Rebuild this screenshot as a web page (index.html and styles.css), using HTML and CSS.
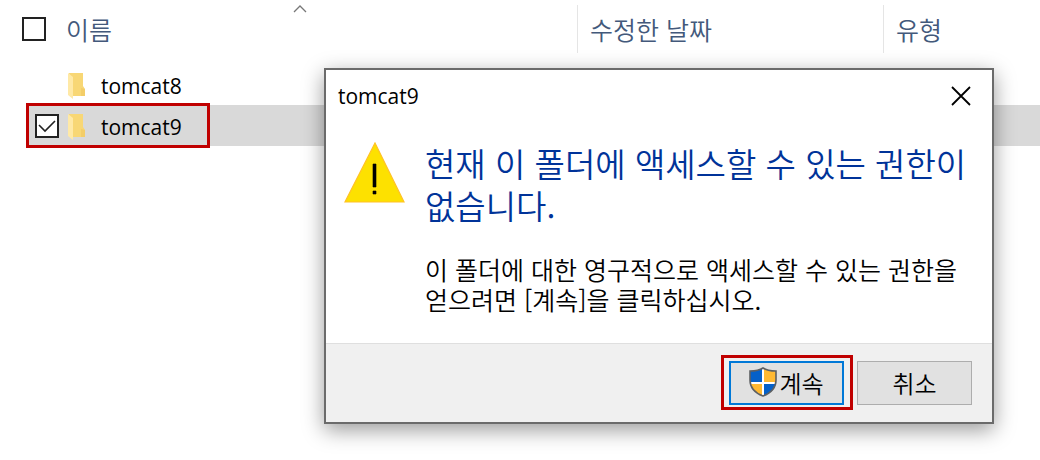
FILE: index.html
```
<!DOCTYPE html>
<html lang="ko">
	<head>
		<meta charset="utf-8">
		<title>tomcat9</title>
		<link rel="stylesheet" href="styles.css">
	</head>
	<body>
		<table class="files">
			<thead>
				<tr>
					<th class="col-name">
						<div class="head head-first">
							<input type="checkbox" id="all" class="check">
							<label for="all">이름</label>
							<svg class="sort" width="14" height="8" viewBox="0 0 14 8"><path d="M1 7L7 1L13 7" fill="none" stroke="#777" stroke-width="1.3"/></svg>
						</div>
					</th>
					<th class="col-date"><div class="head">수정한 날짜</div></th>
					<th class="col-type"><div class="head">유형</div></th>
				</tr>
			</thead>
			<tbody>
				<tr>
					<td>
						<div class="name">
							<span class="tick tick-off"><input type="checkbox" id="tomcat8" class="check"></span>
							<svg class="folder" width="20" height="28" viewBox="0 0 20 28">
								<path d="M2 2H16V15L18 18V25H6Z" fill="#f8d775"/>
								<path d="M14 17L18 18V25H14Z" fill="#f3cd68"/>
								<path d="M1 2L6 6V28L1 24Z" fill="#ffe9a6"/>
							</svg>
							<label for="tomcat8">tomcat8</label>
						</div>
					</td>
					<td></td>
					<td></td>
				</tr>
				<tr class="selected">
					<td>
						<div class="name">
							<span class="tick">
								<input type="checkbox" id="tomcat9" class="check" checked>
								<svg class="tick-mark" width="20" height="14" viewBox="0 0 20 14"><path d="M2 6L8 12L18 2" fill="none" stroke="#222" stroke-width="1.6"/></svg>
							</span>
							<svg class="folder" width="20" height="28" viewBox="0 0 20 28">
								<path d="M2 2H16V15L18 18V25H6Z" fill="#f8d775"/>
								<path d="M14 17L18 18V25H14Z" fill="#f3cd68"/>
								<path d="M1 2L6 6V28L1 24Z" fill="#ffe9a6"/>
							</svg>
							<label for="tomcat9">tomcat9</label>
							<span class="mark mark-row"></span>
						</div>
					</td>
					<td></td>
					<td></td>
				</tr>
			</tbody>
		</table>

		<div class="dialog" role="dialog" aria-labelledby="dialog-title">
			<div class="titlebar">
				<span id="dialog-title">tomcat9</span>
				<button type="button" class="close" aria-label="닫기">
					<svg width="20" height="20" viewBox="0 0 20 20"><path d="M1 1L19 19M19 1L1 19" fill="none" stroke="#000" stroke-width="1.8"/></svg>
				</button>
			</div>
			<div class="content">
				<svg class="warning" width="62" height="62" viewBox="0 0 62 62">
					<path d="M31 1L60 60H1Z" fill="#fde100" stroke="#ffc226" stroke-width="1.2"/>
					<path d="M29 22H32V45H29ZM29 49H32V52H29Z" fill="#000" stroke="#000" stroke-width=".6"/>
				</svg>
				<div class="message">
					<h1>현재 이 폴더에 액세스할 수 있는 권한이 없습니다.</h1>
					<p>이 폴더에 대한 영구적으로 액세스할 수 있는 권한을 얻으려면 [계속]을 클릭하십시오.</p>
				</div>
			</div>
			<div class="footer">
				<button type="button" class="btn btn-default">
					<svg width="28" height="30" viewBox="0 0 28 30">
						<clipPath id="shield"><path d="M14 1C11 3 6 4 1 4V13C1 21 6 26 14 29C22 26 27 21 27 13V4C22 4 17 3 14 1Z"/></clipPath>
						<g clip-path="url(#shield)">
							<path d="M0 0H28V30H0Z" fill="#fff"/>
							<path d="M0 0H13V15H0ZM15 17H28V30H15Z" fill="#0560c8"/>
							<path d="M15 0H28V15H15ZM0 17H13V30H0Z" fill="#ffb932"/>
						</g>
						<path d="M14 1C11 3 6 4 1 4V13C1 21 6 26 14 29C22 26 27 21 27 13V4C22 4 17 3 14 1Z" fill="none" stroke="#5d6063" stroke-width="1.6"/>
					</svg>
					<span>계속</span>
					<span class="mark mark-btn"></span>
				</button>
				<button type="button" class="btn">취소</button>
			</div>
		</div>
	</body>
</html>
```
FILE: styles.css
```
* {
	box-sizing: border-box;
}

body {
	margin: 0;
	min-height: 100vh;
	background-color: white;
	color: black;
	font-family: "Open Sans", "Noto Sans CJK KR", sans-serif;
	font-size: 21px;
}

/* file list */
.files {
	width: 100%;
	table-layout: fixed;
	border-collapse: separate;
	border-spacing: 0;
}

.files th, .files td {
	padding: 0;
	text-align: left;
	font-weight: normal;
}

.files th {
	padding: 5px 0 11px;
}

.col-date {
	width: 306px;
}

.col-type {
	width: 157px;
}

.head {
	display: flex;
	align-items: center;
	position: relative;
	height: 48px;
	padding-left: 12px;
	border-left: 1px solid #e5e5e5;
	color: #43597b;
	font-family: "Noto Sans CJK KR", sans-serif;
	font-size: 25px;
	font-weight: 350;
	line-height: 30px;
}

.head-first {
	gap: 20px;
	margin-left: 22px;
	padding-left: 0;
	border-left: 0;
}

.sort {
	position: absolute;
	top: 0;
	left: 50%;
	transform: translateX(-50%);
}

.name {
	display: flex;
	align-items: center;
	position: relative;
	height: 41px;
	margin-left: 27px;
	padding-left: 8px;
}

.name label {
	padding-top: 2px;
}

.selected .name, .selected td + td {
	background-color: #d9d9d9;
}

.check {
	appearance: none;
	width: 24px;
	height: 24px;
	margin: 0;
	border: 2px solid #222;
	background-color: white;
}

.tick {
	display: grid;
	place-items: center;
}

.tick > * {
	grid-area: 1 / 1;
}

.tick-mark {
	pointer-events: none;
}

.tick-off {
	visibility: hidden;
}

.folder {
	margin: 0 14px 0 8px;
}

/* red highlight frames */
.mark {
	position: absolute;
	border: 3px solid #c00000;
	pointer-events: none;
}

.mark-row {
	top: -2px;
	left: -1px;
	z-index: 1;
	width: 184px;
	height: 45px;
}

.mark-btn {
	inset: -8px -11px -7px -10px;
}

/* permission dialog */
.dialog {
	position: absolute;
	top: 68px;
	left: 324px;
	right: 46px;
	z-index: 2;
	border: 2px solid #6b6b6b;
	background-color: white;
	box-shadow: 0 6px 20px rgba(0, 0, 0, .4);
}

.titlebar {
	display: flex;
	justify-content: space-between;
	align-items: center;
	height: 52px;
	padding: 0 21px 0 12px;
}

.close {
	display: flex;
	padding: 0;
	border: 0;
	background: none;
}

.content {
	display: flex;
	align-items: flex-start;
	gap: 19px;
	padding: 20px 12px 29px 18px;
}

.warning {
	flex: none;
}

.message {
	font-family: "Noto Sans CJK KR", sans-serif;
	font-weight: 350;
	word-break: keep-all;
}

.message h1 {
	margin: 0 0 28px;
	color: #003399;
	font-size: 33px;
	font-weight: 350;
	line-height: 42px;
}

.message p {
	margin: 0;
	font-size: 25px;
	line-height: 30px;
}

.footer {
	display: flex;
	justify-content: flex-end;
	gap: 13px;
	padding: 17px 20px;
	border-top: 1px solid #dfdfdf;
	background-color: #f0f0f0;
}

.btn {
	display: flex;
	justify-content: center;
	align-items: center;
	position: relative;
	width: 115px;
	height: 44px;
	padding: 0 0 2px;
	border: 1px solid #adadad;
	background-color: #e1e1e1;
	color: black;
	font-family: "Noto Sans CJK KR", sans-serif;
	font-size: 24px;
	font-weight: 350;
}

.btn-default {
	gap: 2px;
	border: 2px solid #0078d7;
}
```
